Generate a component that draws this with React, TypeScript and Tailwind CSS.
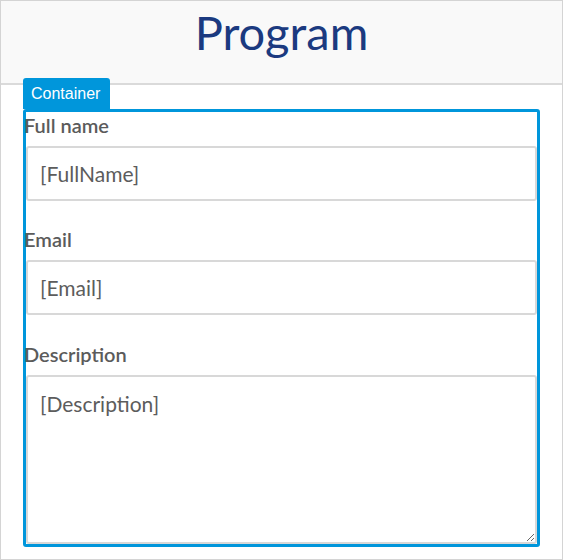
import React from "react";

const fields = [
  { key: "fullName", label: "Full name", value: "[FullName]", gap: "mb-[25px]" },
  { key: "email", label: "Email", value: "[Email]", gap: "mb-[26px]" },
] as const;

export default function App() {
  return (
    <div className="w-[563px] h-[560px] border border-[#d4d4d4] bg-white flex flex-col font-['Lato',sans-serif]">
      {/* Header */}
      <div className="h-[84px] shrink-0 bg-[#f9f9f9] border-b-2 border-[#dadada] pt-[8px] text-center">
        <h1 className="text-[47px] leading-none text-[#1b3a80]">Program</h1>
      </div>

      {/* Body */}
      <div className="flex-1 flex flex-col px-[22px] pb-[12px]">
        <div className="relative -mt-[7px] self-start h-[31px] w-[87px] rounded-t-[3px] bg-[#0096db] pl-[8px] font-['Liberation_Sans',Arial,sans-serif] text-[16px] leading-[31px] text-white">
          Container
        </div>

        <div className="flex-1 flex flex-col border-[3px] border-[#0096db] rounded-[3px]">
          {fields.map((f) => (
            <div key={f.key} className={`flex flex-col ${f.gap}`}>
              <label className="-ml-[2px] mb-[7px] text-[20px] leading-[27px] font-semibold text-[#5b5b5b]">
                {f.label}
              </label>
              <input
                readOnly
                defaultValue={f.value}
                className="h-[55px] w-full rounded-[3px] border-2 border-[#d8d8d8] bg-white px-3 text-[21px] text-[#5c5c5c] outline-none"
              />
            </div>
          ))}

          <div className="flex-1 flex flex-col">
            <label className="-ml-[2px] mb-[7px] text-[20px] leading-[27px] font-semibold text-[#5b5b5b]">
              Description
            </label>
            <textarea
              readOnly
              defaultValue="[Description]"
              className="flex-1 w-full rounded-[3px] border-2 border-[#d8d8d8] bg-white px-3 pt-[12px] text-[21px] leading-[30px] text-[#5c5c5c] outline-none"
            />
          </div>
        </div>
      </div>
    </div>
  );
}
